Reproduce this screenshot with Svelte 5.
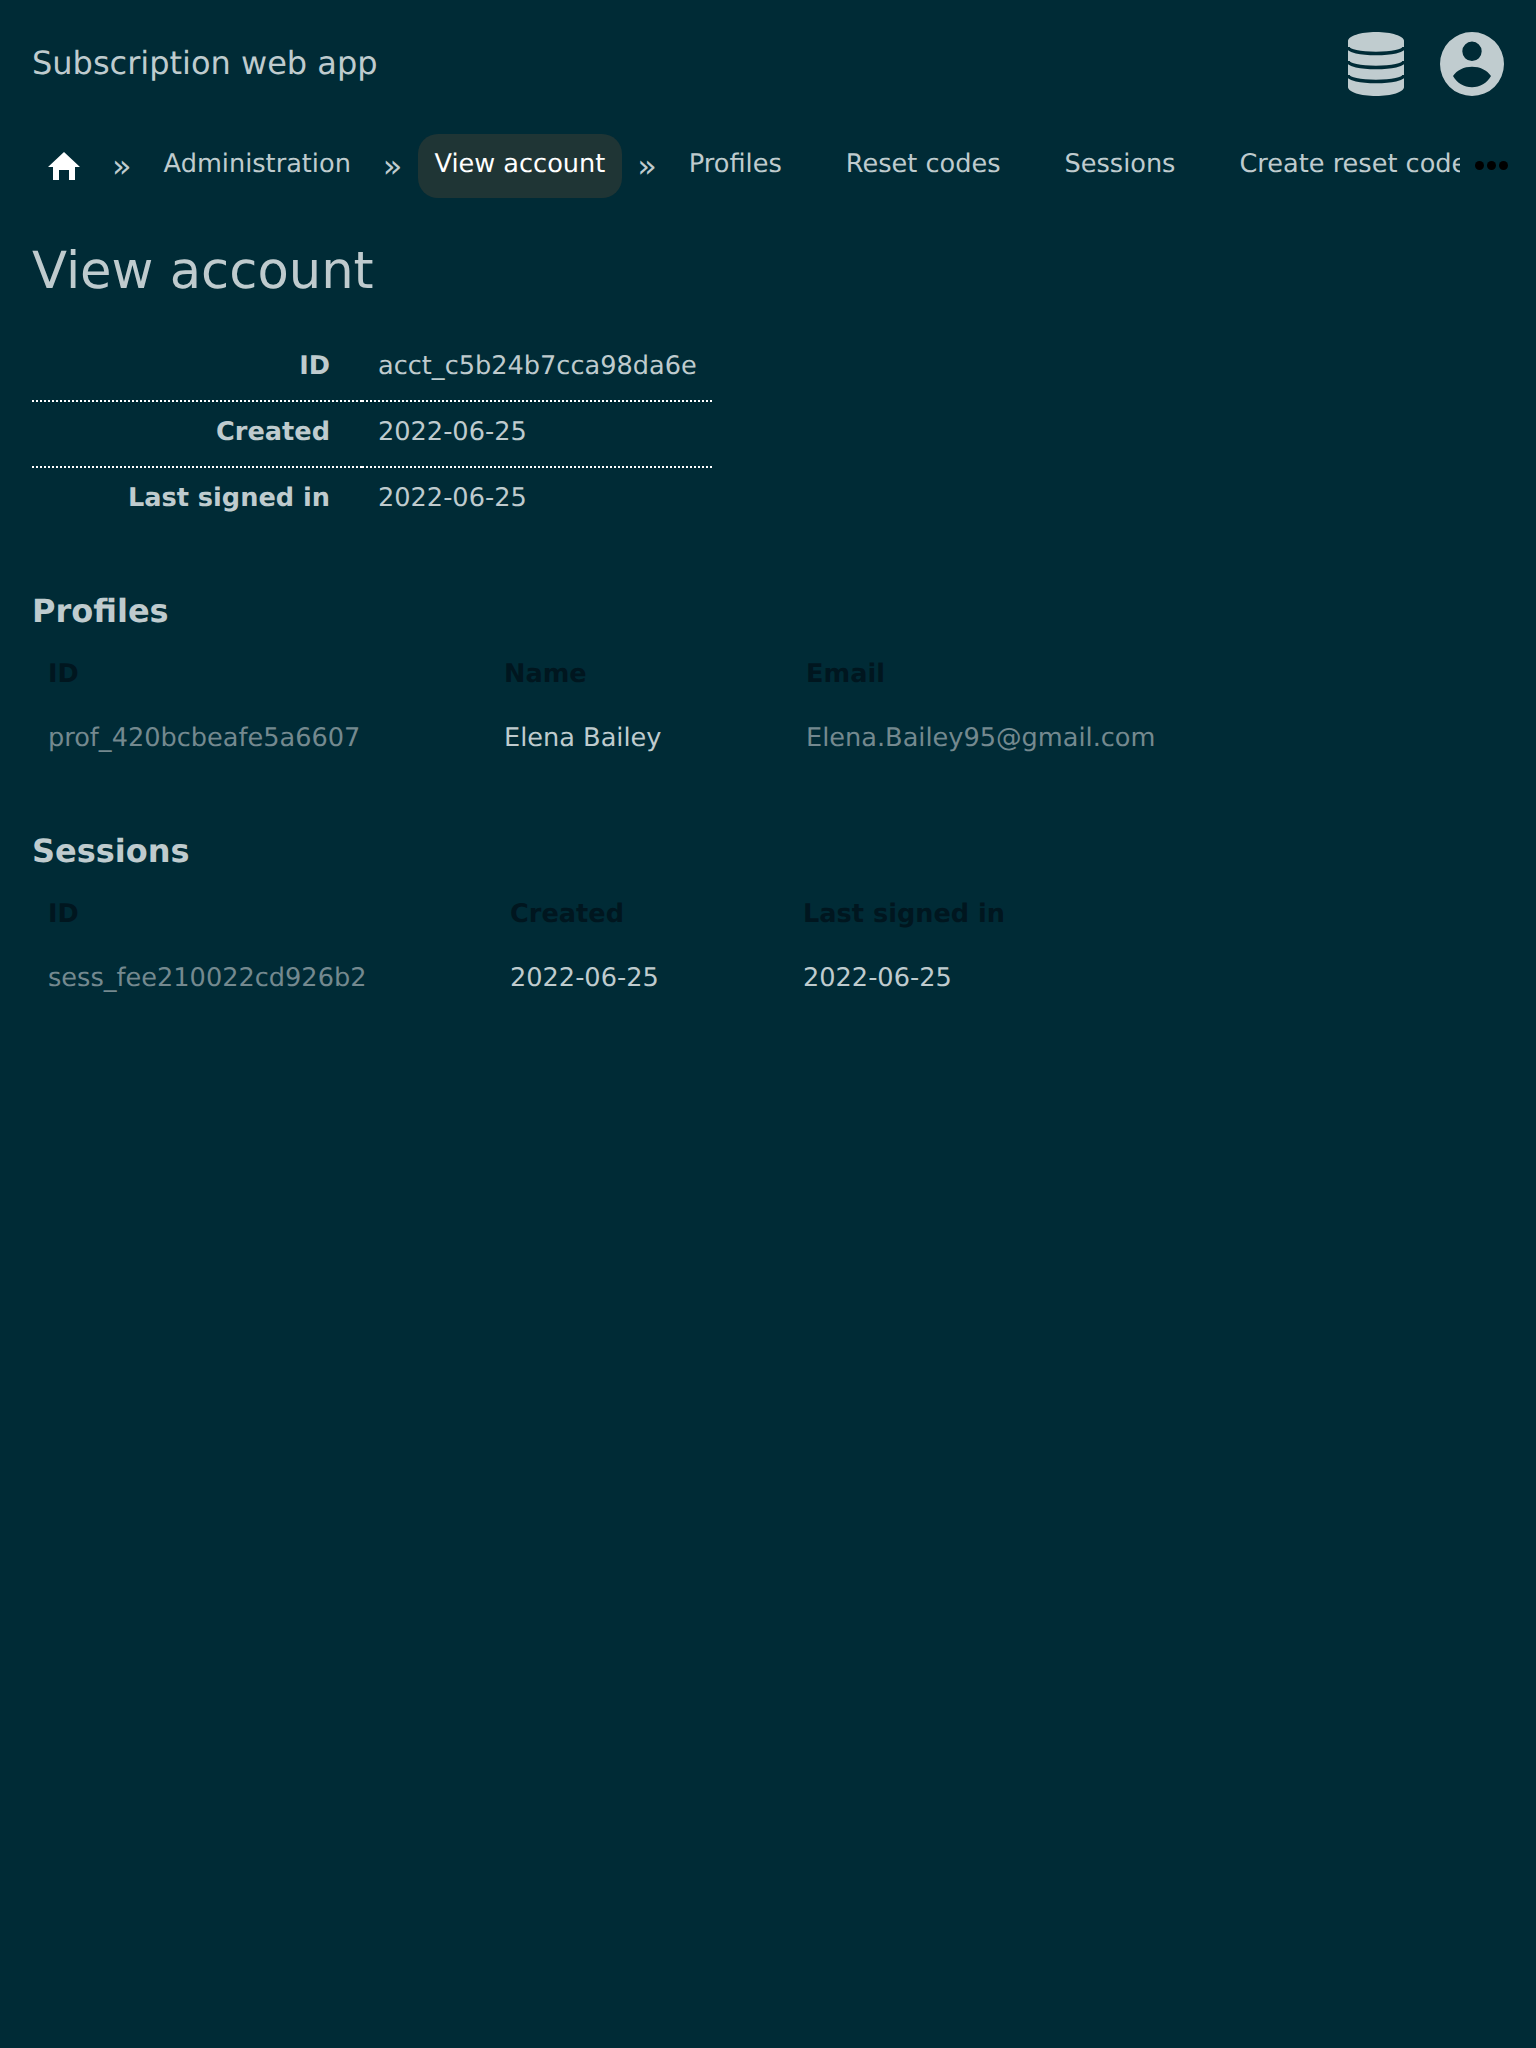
<script>
    const crumbs = ["Profiles", "Reset codes", "Sessions", "Create reset code"];
    const account = [
        ["ID", "acct_c5b24b7cca98da6e"],
        ["Created", "2022-06-25"],
        ["Last signed in", "2022-06-25"],
    ];
</script>

<main>
    <header>
        <div class="brand">Subscription web app</div>
        <div class="tools">
            <svg class="icon db" viewBox="0 0 56 64" aria-hidden="true">
                <path d="M0 9C0 4 12.500 0 28 0s28 4 28 9V55c0 5-12.500 9-28 9S0 60 0 55Z" />
                <path class="band" d="M0 15C0 19 12.500 21.500 28 21.500S56 19 56 15" />
                <path class="band" d="M0 29C0 33 12.500 35.500 28 35.500S56 33 56 29" />
                <path class="band" d="M0 43C0 47 12.500 49.500 28 49.500S56 47 56 43" />
            </svg>
            <svg class="icon" viewBox="0 0 64 64" aria-hidden="true">
                <path fill-rule="evenodd" d="M32 0a32 32 0 1 1 0 64a32 32 0 1 1 0-64zM32 9.600a9.700 9.700 0 1 0 0 19.400a9.700 9.700 0 1 0 0-19.400zM13 44C17 38 24 34.700 32 34.700S47 38 51 44C47 51 40 55.300 32 55.300S17 51 13 44Z" />
            </svg>
        </div>
    </header>

    <nav>
        <a class="home" href="#home" aria-label="Home">
            <svg viewBox="0 0 32 28" aria-hidden="true">
                <path d="M16 0L32 15H27V28H21V18H11V28H5V15H0Z" />
            </svg>
        </a>
        <span class="sep">»</span>
        <a href="#admin">Administration</a>
        <span class="sep">»</span>
        <a class="current" href="#view">View account</a>
        <span class="sep">»</span>
        <div class="overflow">
            {#each crumbs as crumb}
                <a href="#crumb">{crumb}</a>
            {/each}
        </div>
        <div class="more" aria-hidden="true"><i></i><i></i><i></i></div>
    </nav>

    <section class="content">
        <h1>View account</h1>

        <table class="details">
            <tbody>
                {#each account as row}
                    <tr>
                        <th>{row[0]}</th>
                        <td>{row[1]}</td>
                    </tr>
                {/each}
            </tbody>
        </table>

        <h2 class="first">Profiles</h2>
        <div class="grid profiles">
            <div class="head">ID</div>
            <div class="head">Name</div>
            <div class="head">Email</div>
            <a class="cell link" href="#p">prof_420bcbeafe5a6607</a>
            <div class="cell">Elena Bailey</div>
            <a class="cell link" href="#m">Elena.Bailey95@gmail.com</a>
        </div>

        <h2>Sessions</h2>
        <div class="grid sessions">
            <div class="head">ID</div>
            <div class="head">Created</div>
            <div class="head">Last signed in</div>
            <a class="cell link" href="#s">sess_fee210022cd926b2</a>
            <div class="cell">2022-06-25</div>
            <div class="cell">2022-06-25</div>
        </div>
    </section>
</main>

<style>
    :global(body) {
        background: #002b36;
        margin: 0;
    }

    main {
        background: #002b36;
        color: #bfcbce;
        font-family: "DejaVu Sans", sans-serif;
        font-size: 25.6px;
        min-height: 2048px;
        text-rendering: geometricPrecision;
    }

    a {
        color: inherit;
        text-decoration: none;
    }

    header {
        align-items: center;
        display: flex;
        height: 64px;
        justify-content: space-between;
        padding: 32px;
    }

    .brand {
        font-size: 32px;
        margin-bottom: 2px;
    }

    .tools {
        display: flex;
        gap: 36px;
    }

    .icon {
        display: block;
        fill: #c0cccf;
        height: 64px;
        width: 64px;
    }

    .icon.db {
        width: 56px;
    }

    .band {
        fill: none;
        stroke: #002b36;
        stroke-width: 3.500;
    }

    nav {
        align-items: center;
        display: flex;
        height: 64px;
        margin-top: 6px;
        padding: 0 76px 0 32px;
        position: relative;
    }

    nav a {
        flex: none;
        line-height: 60px;
        padding: 0 16px 4px;
    }

    .home {
        height: 64px;
        line-height: 0;
        padding: 0 16px;
    }

    .home svg {
        display: block;
        fill: #ffffff;
        height: 28px;
        margin-top: 18px;
        width: 32px;
    }

    .sep {
        flex: none;
        font-size: 32px;
        padding: 0 16px;
    }

    nav a.current {
        background: #1f3535;
        border-radius: 20px;
        color: #ffffff;
        margin-right: -1px;
        padding-right: 17px;
    }

    .overflow {
        display: flex;
        flex: 1;
        gap: 32px;
        min-width: 0;
        overflow: hidden;
    }

    .more {
        display: flex;
        gap: 3px;
        position: absolute;
        right: 28px;
        top: 27px;
    }

    .more i {
        background: #000000;
        border-radius: 50%;
        height: 9px;
        width: 9px;
    }

    .content {
        padding: 0 32px;
    }

    h1 {
        font-size: 51.2px;
        font-weight: 400;
        line-height: 64px;
        margin: 41px 0 33px;
    }

    .details {
        border-collapse: collapse;
        margin-bottom: 59px;
    }

    .details th {
        font-weight: 700;
        padding: 14px 32px 18px 0;
        text-align: right;
        width: 298px;
    }

    .details td {
        padding: 14px 15px 18px 16px;
    }

    .details th, .details td {
        line-height: 32px;
    }

    .details tr + tr th, .details tr + tr td {
        border-top: 2px dotted #ffffff;
    }

    h2 {
        font-size: 32px;
        font-weight: 700;
        line-height: 40px;
        margin: 61px 0 11px;
    }

    h2.first {
        margin-top: 0;
    }

    .grid {
        display: grid;
        justify-content: start;
    }

    .profiles {
        grid-template-columns: 456px 302px auto;
    }

    .sessions {
        grid-template-columns: 462px 293px auto;
    }

    .head, .cell {
        line-height: 32px;
        padding: 16px;
    }

    .head {
        color: #00161f;
        font-weight: 700;
    }

    .cell {
        color: #bfcbce;
    }

    .link {
        color: #74898f;
    }
</style>
